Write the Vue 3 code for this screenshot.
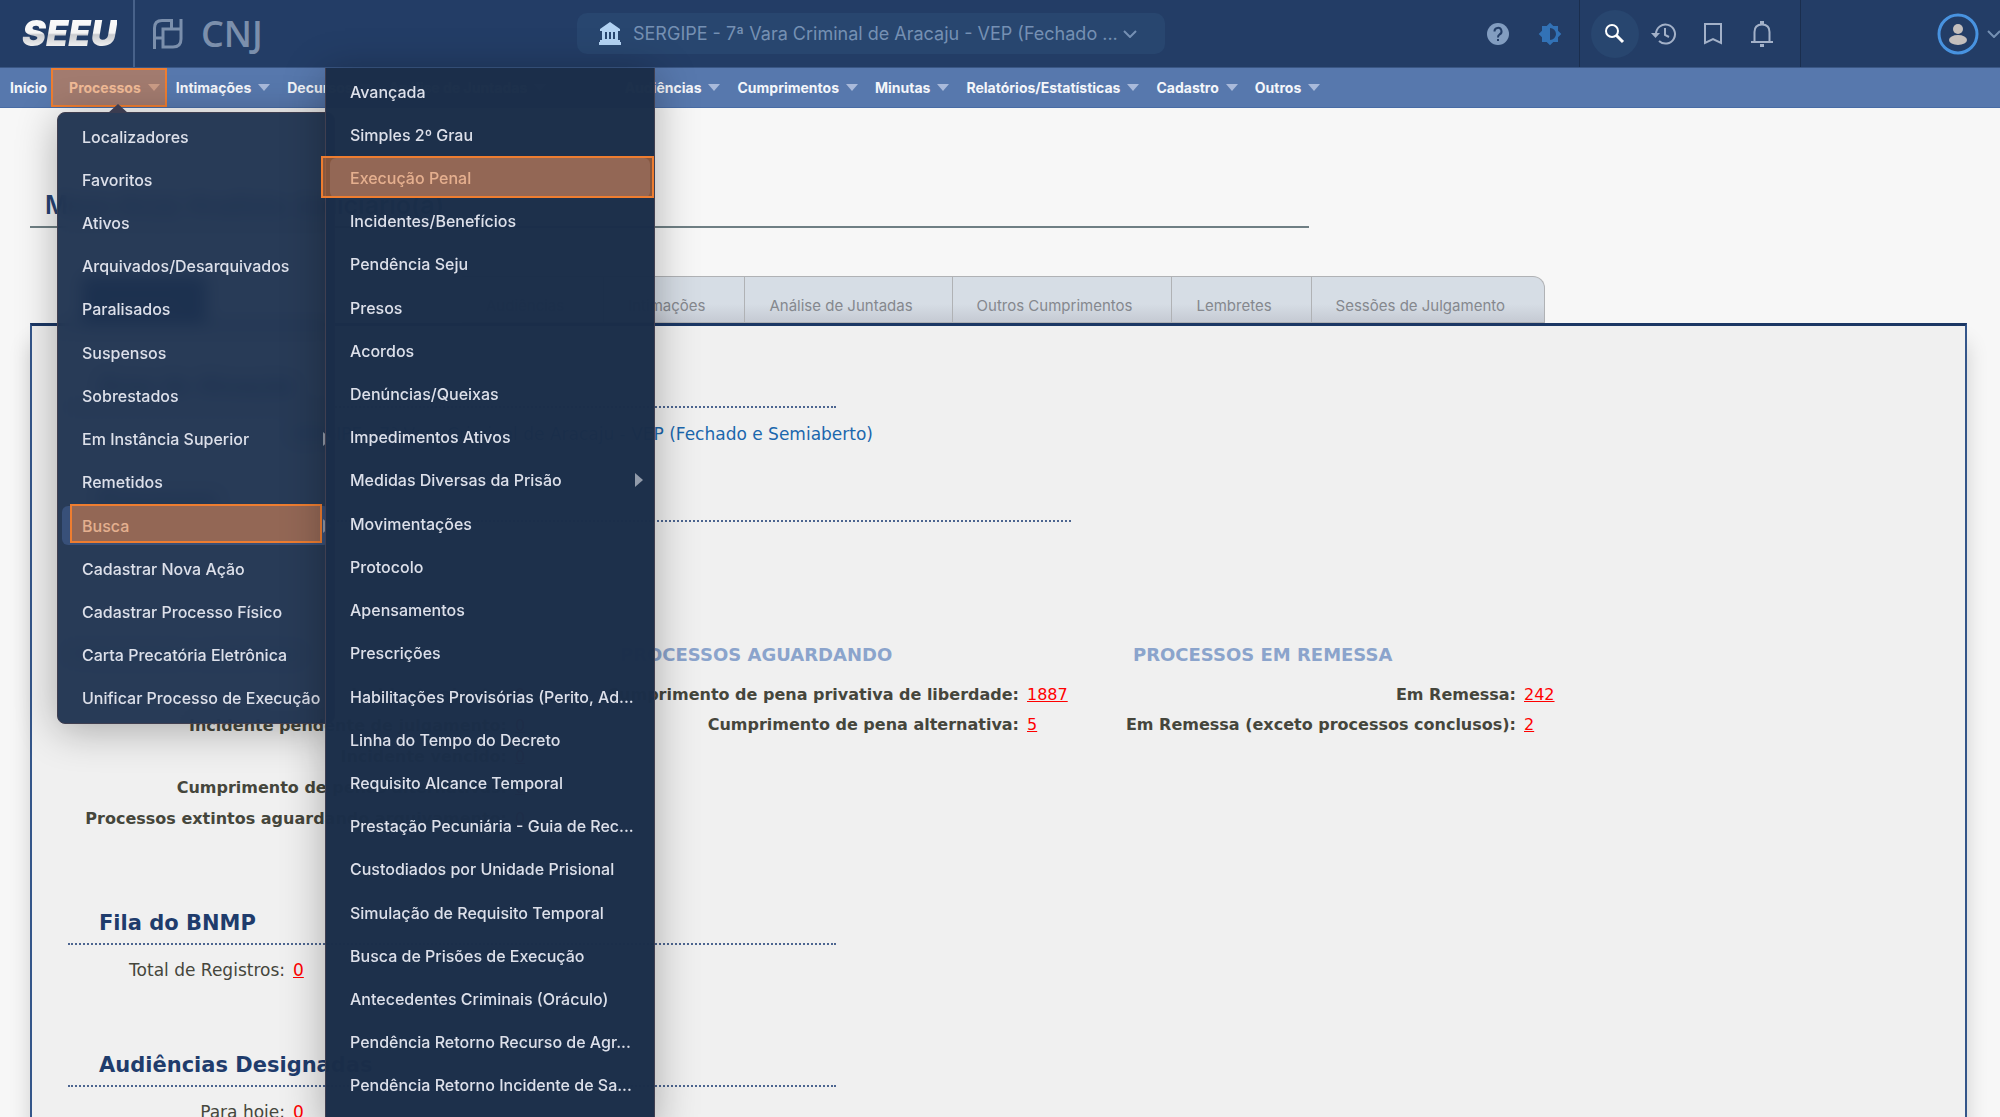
<script setup>
const navItems = [
  { label: 'Início', plain: true },
  { label: 'Processos', open: true },
  { label: 'Intimações' },
  { label: 'Decursos' },
  { label: 'Análise de Juntadas', wide: true },
  { label: 'Audiências' },
  { label: 'Cumprimentos' },
  { label: 'Minutas' },
  { label: 'Relatórios/Estatísticas' },
  { label: 'Cadastro' },
  { label: 'Outros' },
]

const processMenu = [
  { label: 'Localizadores' },
  { label: 'Favoritos' },
  { label: 'Ativos' },
  { label: 'Arquivados/Desarquivados' },
  { label: 'Paralisados' },
  { label: 'Suspensos' },
  { label: 'Sobrestados' },
  { label: 'Em Instância Superior', more: true },
  { label: 'Remetidos' },
  { label: 'Busca', more: true, active: true },
  { label: 'Cadastrar Nova Ação' },
  { label: 'Cadastrar Processo Físico' },
  { label: 'Carta Precatória Eletrônica' },
  { label: 'Unificar Processo de Execução' },
]

const searchMenu = [
  { label: 'Avançada' },
  { label: 'Simples 2º Grau' },
  { label: 'Execução Penal', active: true },
  { label: 'Incidentes/Benefícios' },
  { label: 'Pendência Seju' },
  { label: 'Presos' },
  { label: 'Acordos' },
  { label: 'Denúncias/Queixas' },
  { label: 'Impedimentos Ativos' },
  { label: 'Medidas Diversas da Prisão', more: true },
  { label: 'Movimentações' },
  { label: 'Protocolo' },
  { label: 'Apensamentos' },
  { label: 'Prescrições' },
  { label: 'Habilitações Provisórias (Perito, Ad...' },
  { label: 'Linha do Tempo do Decreto' },
  { label: 'Requisito Alcance Temporal' },
  { label: 'Prestação Pecuniária - Guia de Rec...' },
  { label: 'Custodiados por Unidade Prisional' },
  { label: 'Simulação de Requisito Temporal' },
  { label: 'Busca de Prisões de Execução' },
  { label: 'Antecedentes Criminais (Oráculo)' },
  { label: 'Pendência Retorno Recurso de Agr...' },
  { label: 'Pendência Retorno Incidente de Sa...' },
]

const tabs = ['Processos', 'Audiências', 'Intimações', 'Análise de Juntadas', 'Outros Cumprimentos', 'Lembretes', 'Sessões de Julgamento']
</script>

<template>
  <div class="page">
    <header class="top">
      <a class="brand" href="#" aria-label="SEEU"><span>SEEU</span></a>
      <a class="cnj" href="#" aria-label="CNJ">
        <svg width="30" height="30" viewBox="0 0 30 30" fill="none" stroke="#7b8fac" stroke-width="3">
          <path d="M1.500 30V9Q1.500 1.500 9 1.500H18.500V10" />
          <path d="M28 0V20Q28 28 20 28H10V10H28M1.500 19H10" />
        </svg>
        <span>CNJ</span>
      </a>

      <button class="court" type="button">
        <svg width="22" height="23" viewBox="0 0 22 23" fill="#b3d3f3">
          <path d="M11 0L21 7V9H1V7ZM3 9H19V18H3ZM1 18H21V20H1ZM0 20H22V23H0Z" />
          <path d="M6 10H8V17H6ZM10 10H12V17H10ZM14 10H16V17H14Z" fill="#28466f" />
        </svg>
        <span>SERGIPE - 7ª Vara Criminal de Aracaju - VEP (Fechado ...</span>
        <svg width="14" height="8" viewBox="0 0 14 8" fill="none" stroke="#7590b3" stroke-width="2"><path d="M1 1L7 7L13 1" /></svg>
      </button>

      <div class="tools">
        <button type="button" aria-label="Ajuda">
          <svg width="22" height="22" viewBox="0 0 22 22">
            <circle cx="11" cy="11" r="11" fill="#829dc0" />
            <path d="M7.500 8.500A3.500 3.500 0 1 1 12.500 11.500Q11 12.500 11 14.500" fill="none" stroke="#233d66" stroke-width="2" />
            <path d="M10 16H12V18H10Z" fill="#233d66" />
          </svg>
        </button>
        <button type="button" aria-label="Contraste">
          <svg width="24" height="24" viewBox="0 0 24 24" fill="#3272b6">
            <path fill-rule="evenodd" d="M20 15.300L23.300 12L20 8.700V4H15.300L12 .7L8.700 4H4V8.700L.7 12L4 15.300V20H8.700L12 23.300L15.300 20H20ZM12 18V6A6 6 0 0 1 12 18Z" />
          </svg>
        </button>
      </div>
      <div class="tools quick">
        <button type="button" class="round" aria-label="Buscar">
          <svg width="20" height="20" viewBox="0 0 20 20" fill="none" stroke="#fff" stroke-width="2"><circle cx="7" cy="7" r="6" /><path d="M11 11L18 18" stroke-width="3" /></svg>
        </button>
        <button type="button" aria-label="Histórico">
          <svg width="26" height="24" viewBox="0 0 26 24" fill="none" stroke="#a3b1c8" stroke-width="2">
            <path d="M5 12A9.500 9.500 0 1 1 8 19" /><path d="M14 6V13L18 15" /><path d="M0 11H9L4.500 16Z" fill="#a3b1c8" stroke="none" />
          </svg>
        </button>
        <button type="button" aria-label="Favoritos">
          <svg width="18" height="22" viewBox="0 0 18 22" fill="none" stroke="#a3b1c8" stroke-width="2"><path d="M1 1H17V20L9 16L1 20Z" /></svg>
        </button>
        <button type="button" aria-label="Notificações">
          <svg width="22" height="26" viewBox="0 0 22 26" fill="none" stroke="#a3b1c8" stroke-width="2">
            <path d="M0 21H22M3.500 20V11Q3.500 3.500 11 3.500Q18.500 3.500 18.500 11V20" /><path d="M9 0H13V4H9ZM9 23H13V26H9Z" fill="#a3b1c8" stroke="none" />
          </svg>
        </button>
      </div>
      <button type="button" class="user" aria-label="Usuário">
        <svg width="42" height="42" viewBox="0 0 42 42">
          <circle cx="21" cy="21" r="19" fill="none" stroke="#4893e0" stroke-width="3" />
          <circle cx="21" cy="16" r="5" fill="#c4bfbd" /><ellipse cx="21" cy="27" rx="9" ry="5" fill="#c4bfbd" />
        </svg>
        <svg width="14" height="8" viewBox="0 0 14 8" fill="none" stroke="#7590b3" stroke-width="2"><path d="M1 1L7 7L13 1" /></svg>
      </button>
    </header>

    <nav class="bar">
      <a v-for="n in navItems" :key="n.label" href="#" :class="{ plain: n.plain, open: n.open, wide: n.wide }">
        <span>{{ n.label }}</span><i v-if="!n.plain"></i>
      </a>
    </nav>

    <ul class="menu first">
      <li v-for="m in processMenu" :key="m.label">
        <a href="#" :class="{ active: m.active, more: m.more }">{{ m.label }}</a>
      </li>
    </ul>
    <ul class="menu second">
      <li v-for="m in searchMenu" :key="m.label">
        <a href="#" :class="{ active: m.active, more: m.more }">{{ m.label }}</a>
      </li>
    </ul>

    <main>
      <h1>Mesa do(a) Analista Judiciário(a)</h1>
      <div class="tabs">
        <a v-for="(t, i) in tabs" :key="t" href="#" :class="{ current: i === 0 }"><span>{{ t }}</span></a>
      </div>
      <section class="panel">
        <h2>Área de Atuação</h2>
        <p class="area"><a href="#">SERGIPE - 7ª Vara Criminal de Aracaju - VEP (Fechado e Semiaberto)</a></p>
        <h2 class="long">Processos</h2>
        <div class="columns">
          <div class="col one">
            <h3>PROCESSOS (ABERTAS)</h3>
            <dl>
              <dt>Incidente aberto:</dt><dd><a href="#">0</a></dd>
              <dt>Incidente pendente de julgamento:</dt><dd><a href="#">0</a></dd>
              <dt>Incidente vencido:</dt><dd><a href="#">0</a></dd>
              <dt>Cumprimento de penas alternativas:</dt><dd><a href="#">0</a></dd>
              <dt>Processos extintos aguardando arquivamento:</dt><dd><a href="#">0</a></dd>
            </dl>
          </div>
          <div class="col two">
            <h3>PROCESSOS AGUARDANDO</h3>
            <dl>
              <dt>Cumprimento de pena privativa de liberdade:</dt><dd><a href="#">1887</a></dd>
              <dt>Cumprimento de pena alternativa:</dt><dd><a href="#">5</a></dd>
            </dl>
          </div>
          <div class="col three">
            <h3>PROCESSOS EM REMESSA</h3>
            <dl>
              <dt>Em Remessa:</dt><dd><a href="#">242</a></dd>
              <dt>Em Remessa (exceto processos conclusos):</dt><dd><a href="#">2</a></dd>
            </dl>
          </div>
        </div>
        <h2>Fila do BNMP</h2>
        <dl class="single"><dt>Total de Registros:</dt><dd><a href="#">0</a></dd></dl>
        <h2>Audiências Designadas</h2>
        <dl class="single"><dt>Para hoje:</dt><dd><a href="#">0</a></dd></dl>
      </section>
    </main>
  </div>
</template>

<style>
body { margin: 0; background: #f7f7f7; }
</style>

<style scoped>
* { box-sizing: border-box; }
.page { position: relative; height: 100vh; overflow: hidden; background: #f7f7f7; font-family: Inter, "Liberation Sans", sans-serif; }
a { text-decoration: none; color: inherit; }
button { border: 0; padding: 0; background: none; font: inherit; display: flex; align-items: center; justify-content: center; }
ul, dl, dd, h1, h2, h3, p { margin: 0; padding: 0; list-style: none; }

.top { display: flex; align-items: center; height: 68px; background: #233d66; border-bottom: 1px solid #3a5785; }
.brand { width: 135px; height: 67px; padding-left: 22px; border-right: 2px solid #48628a; font: italic 900 36px/67px Inter, sans-serif; }
.brand span { color: transparent; background: linear-gradient(#fff, #f4f4f4 50%, #c8cace 54%, #f0f0f0 80%); background-clip: text; -webkit-background-clip: text; }
.cnj { display: flex; align-items: center; gap: 18px; padding-left: 18px; width: 442px; color: #7b8fac; font: 600 36px/64px "Open Sans", sans-serif; }
.court { width: 588px; height: 41px; padding: 0 28px 0 22px; gap: 12px; border-radius: 10px; background: #28466f; color: #7590b3; font-size: 18px; }
.court svg { flex: none; }
.court span { flex: 1; min-width: 0; text-align: left; white-space: nowrap; }
.tools { display: flex; align-items: center; height: 67px; margin-left: auto; gap: 28px; padding-right: 17px; }
.tools button { width: 24px; }
.quick { margin-left: 0; width: 222px; padding: 0 0 0 11px; gap: 0; border: solid #1a2e4e; border-width: 0 1px; }
.quick button { width: 49px; height: 48px; }
.quick .round { width: 48px; border-radius: 50%; background: #28466f; }
.user { gap: 8px; width: 62px; margin-left: 137px; }
.user svg { flex: none; }

.bar { display: flex; height: 40px; padding-left: 10px; background: #5778ad; border-bottom: 1px solid #486ca5; color: #f4f6fa; font-size: 14px; font-weight: 700; }
.bar a { position: relative; display: flex; align-items: center; gap: 7px; padding-right: 17px; white-space: nowrap; }
.bar i { border: solid transparent; border-width: 7px 6px 0; border-top-color: #a9badb; }
.bar .plain { padding-right: 4px; }
.bar .open { padding: 0 7px 0 18px; margin-right: 9px; }
.bar .open::after, .active::after { content: ""; position: absolute; inset: 0; border: 2px solid #ee7d30; background: rgba(237, 125, 49, .5); }
.bar .wide { width: 236px; }

.menu { position: absolute; z-index: 2; display: grid; grid-auto-rows: 1fr; color: #dde0ea; font-size: 16px; font-weight: 500; border: 1px solid #403f50; box-shadow: 0 6px 40px rgba(0, 0, 0, .3); }
.menu li { display: grid; padding: 2px 4px; }
.menu a { position: relative; display: flex; align-items: center; padding-left: 20px; border-radius: 6px; white-space: nowrap; }
.first { top: 112px; left: 57px; width: 278px; height: 612px; padding: 2px 0 3px; border-radius: 8px; background: rgba(28, 48, 78, .95); backdrop-filter: blur(8px); }
.first::before { content: ""; position: absolute; top: -9px; left: 50px; border: solid transparent; border-width: 0 10px 9px; border-bottom-color: #3b3c50; }
.second { top: 68px; left: 325px; width: 330px; padding: 2px 0 20px; min-height: 1060px; border-top: 0; background: rgba(26, 46, 73, .99); }
.menu .active { background: #385079; }
.first .active::after { inset: -2px 8px 2px 8px; }
.second .active::after { inset: -2px -4px 0 -9px; }
.more::before { content: ""; position: absolute; right: 7px; border: solid transparent; border-width: 7px 0 7px 8px; border-left-color: #929baa; }
.first .more::before { right: -1px; }

main { padding: 78px 33px 0 30px; }
h1 { width: 1279px; height: 42px; padding-left: 15px; border-bottom: 2px solid #6f7f84; color: #274374; font-size: 25px; line-height: 38px; font-weight: 600; }
.tabs { position: relative; display: flex; height: 47px; margin-top: 48px; width: 1515px; justify-content: flex-end; color: #85888e; font-size: 15px; }
.tabs a { display: flex; align-items: center; padding: 11px 39px 0 24px; border: 1px solid #b0b2b5; border-left: 0; white-space: nowrap; background: linear-gradient(#d6dde5 60%, #c5cad3); }
.tabs a:last-child { border-top-right-radius: 12px; }
.tabs .current { background: #1b3764; width: 125px; margin: 0 auto 0 52px; }
.panel { padding: 46px 36px 0; min-height: 900px; border: 2px solid #34568a; border-top: 3px solid #1b3764; background: #f0f0f0; box-shadow: 0 20px 20px rgba(0, 0, 0, .16); font-family: Verdana, "DejaVu Sans", sans-serif; font-size: 16px; }
h2 { width: 768px; height: 36px; padding-left: 31px; border-bottom: 2px dotted #4c6590; color: #1f3c6c; font-size: 21px; line-height: 28px; }
h2.long { width: 1003px; }
.area { width: 805px; height: 78px; padding: 14px 0 0; text-align: right; line-height: 24px; color: #1b67ad; font-size: 17px; }
.columns { display: flex; height: 387px; padding-top: 120px; }
h3 { height: 38px; font-size: 18px; line-height: 26px; color: #8ba4cc; white-space: nowrap; }
.one { width: 552px; }
.two { width: 446px; }
.three { width: 520px; }
dl { display: grid; grid-template-columns: 439px 1fr; column-gap: 8px; grid-auto-rows: 31px; line-height: 30px; }
dt { text-align: right; color: #45463c; font-weight: bold; white-space: nowrap; justify-self: end; }
.two dl, .three dl { grid-auto-rows: 30px; }
.two dl { grid-template-columns: 399px 1fr; }
.three dl { grid-template-columns: 450px 1fr; }
.three h3 { padding-left: 67px; }
dd a { color: #ff0000; text-decoration: underline; }
dl.single { grid-template-columns: 217px 1fr; height: 106px; padding-top: 10px; font-size: 17px; }
.single dt { font-weight: normal; }
</style>
